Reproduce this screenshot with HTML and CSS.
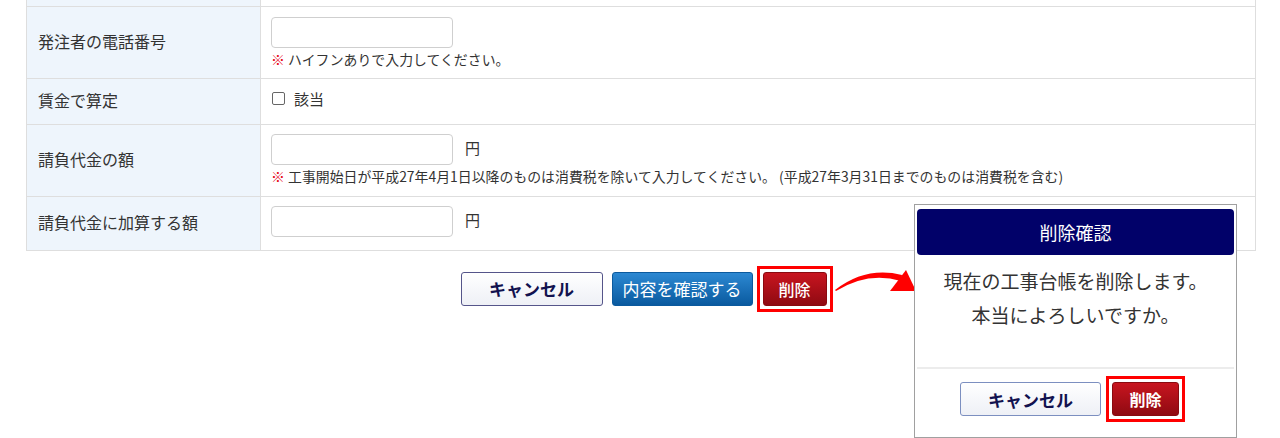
FILE: index.html
```html
<!DOCTYPE html>
<html lang="ja">
<head>
<meta charset="utf-8">
<link rel="stylesheet" href="styles.css">
</head>
<body>
<div class="page">
  <table class="form">
    <tr class="cut">
      <th></th><td></td>
    </tr>
    <tr class="r1">
      <th>発注者の電話番号</th>
      <td>
        <div class="field"><span class="input"></span></div>
        <div class="note"><span class="mark">※</span> ハイフンありで入力してください。</div>
      </td>
    </tr>
    <tr class="r2">
      <th>賃金で算定</th>
      <td><label class="check"><span class="box"></span>該当</label></td>
    </tr>
    <tr class="r3">
      <th>請負代金の額</th>
      <td>
        <div class="field"><span class="input"></span><span class="unit">円</span></div>
        <div class="note"><span class="mark">※</span> 工事開始日が平成27年4月1日以降のものは消費税を除いて入力してください。 (平成27年3月31日までのものは消費税を含む)</div>
      </td>
    </tr>
    <tr class="r4">
      <th>請負代金に加算する額</th>
      <td>
        <div class="field"><span class="input"></span><span class="unit">円</span></div>
      </td>
    </tr>
  </table>

  <div class="actions">
    <button class="btn btn-cancel">キャンセル</button>
    <button class="btn btn-confirm">内容を確認する</button>
    <span class="hl"><button class="btn btn-delete">削除</button></span>
  </div>

  <svg class="arrow" width="90" height="40" viewBox="0 0 90 40">
    <path d="M5 30 Q36 6 72 15 L71 21 Q38 11 6 31 Z" fill="#f00"/>
    <path d="M76 10 L86 31 L60 31 Z" fill="#f00"/>
  </svg>

  <div class="dialog">
    <div class="dlg-head">削除確認</div>
    <div class="dlg-body">
      <p>現在の工事台帳を削除します。</p>
      <p>本当によろしいですか。</p>
    </div>
    <div class="dlg-foot">
      <button class="btn btn-cancel dlg-cancel">キャンセル</button>
      <span class="hl"><button class="btn btn-delete dlg-delete">削除</button></span>
    </div>
  </div>
</div>
</body>
</html>
```

FILE: styles.css
```css
* { box-sizing: border-box; }
html, body { margin: 0; padding: 0; background: #fff; }
body {
  font-family: "Noto Sans CJK JP", "Noto Sans", sans-serif;
  color: #333;
  width: 1280px;
  height: 438px;
  overflow: hidden;
}
.page {
  position: relative;
  padding-left: 26px;
  width: 1280px;
  height: 438px;
}
.form {
  border-collapse: collapse;
  width: 1230px;
  table-layout: fixed;
}
.form th, .form td {
  border: 1px solid #dedede;
  padding: 0;
}
.form th {
  width: 234px;
  background: #eef5fc;
  text-align: left;
  font-weight: normal;
  font-size: 16px;
  padding-left: 11px;
  padding-bottom: 2px;
  line-height: 20px;
  vertical-align: middle;
}
.form td {
  padding-left: 10px;
  vertical-align: middle;
}
.form tr.cut th, .form tr.cut td {
  border-top: none;
  height: 6px;
  padding: 0;
}
.r1 td { height: 72px; padding-top: 10px; padding-bottom: 9px; vertical-align: top; }
.r2 td { height: 46px; padding-bottom: 5px; }
.r3 td { height: 72px; padding-top: 9px; vertical-align: top; }
.r4 td { height: 54px; padding-top: 9px; vertical-align: top; }
.field {
  display: flex;
  align-items: center;
  height: 31px;
}
.input {
  display: block;
  width: 182px;
  height: 31px;
  border: 1px solid #cfcfcf;
  border-radius: 4px;
  background: #fff;
}
.unit {
  font-size: 15px;
  margin-left: 12px;
  margin-top: -4px;
}
.note {
  font-size: 13.9px;
  line-height: 18px;
  margin-top: 2px;
  white-space: nowrap;
}
.mark { color: #e60012; font-weight: bold; }
.check {
  display: flex;
  align-items: center;
  font-size: 15px;
}
.box {
  display: inline-block;
  width: 13px;
  height: 13px;
  border: 1px solid #666;
  border-radius: 2px;
  margin: 0 9px 0 1px;
}
.actions {
  display: flex;
  justify-content: center;
  align-items: center;
  gap: 9px;
  padding: 15px 0 0 11px;
  width: 1230px;
}
.btn {
  font-family: "Noto Sans CJK JP", "Noto Sans", sans-serif;
  height: 34px;
  border-radius: 3px;
  padding: 0;
  line-height: 1;
  cursor: pointer;
  display: block;
}
.btn-cancel {
  width: 142px;
  background: linear-gradient(#ffffff, #eef0f6);
  border: 1px solid #55558a;
  color: #12124f;
  font-weight: bold;
  font-size: 17px;
}
.btn-confirm {
  width: 141px;
  background: linear-gradient(#2c88d2, #0a5a9f);
  border: 1px solid #0b5a9e;
  color: #fff;
  font-size: 17px;
}
.btn-delete {
  width: 64px;
  background: linear-gradient(#c8151f, #8f0a12);
  border: 1px solid #8a0a10;
  color: #fff;
  font-size: 16px;
  font-weight: 500;
}
.hl {
  display: block;
  border: 3px solid #ff0000;
  padding: 3px;
  margin-left: -5px;
}
.arrow {
  position: absolute;
  left: 830px;
  top: 260px;
}
.dialog {
  position: absolute;
  left: 914px;
  top: 204px;
  width: 323px;
  height: 234px;
  background: #fff;
  border: 1px solid #a0a0a0;
  padding: 4px 2px 0;
}
.dlg-head {
  background: #010169;
  color: #fff;
  height: 46px;
  border-radius: 4px;
  display: flex;
  align-items: center;
  justify-content: center;
  font-size: 18px;
}
.dlg-body {
  height: 114px;
  padding-top: 9px;
  text-align: center;
  font-size: 19px;
  color: #333;
  border-bottom: 2px solid #ececec;
}
.dlg-body p {
  margin: 0;
  line-height: 34px;
}
.dlg-foot {
  display: flex;
  justify-content: center;
  align-items: center;
  gap: 10px;
  padding: 7px 6px 0 0;
}
.dlg-cancel {
  width: 141px;
  font-size: 17px;
  border-color: #7c8fc0;
}
.dlg-delete {
  width: 67px;
  font-size: 16px;
  font-weight: bold;
}
```
